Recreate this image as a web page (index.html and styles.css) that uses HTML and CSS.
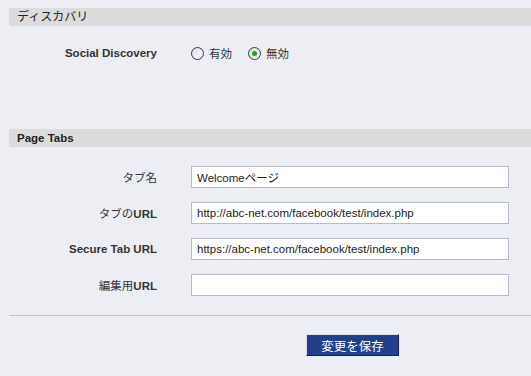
FILE: index.html
```html
<!DOCTYPE html>
<html lang="ja">
<head>
  <meta charset="UTF-8" />
  <title>アプリ設定</title>
  <link rel="stylesheet" href="styles.css">
</head>
<body>
  <div class="settings">
    <div class="section-head">ディスカバリ</div>
    <div class="row row-discovery">
      <div class="label bold">Social Discovery</div>
      <div class="field radios">
        <label class="radio"><span class="dot"></span>有効</label>
        <label class="radio"><span class="dot on"></span>無効</label>
      </div>
    </div>

    <div class="section-head bold">Page Tabs</div>
    <div class="rows">
      <div class="row">
        <div class="label">タブ名</div>
        <div class="field"><input class="text" value="Welcomeページ" /></div>
      </div>
      <div class="row">
        <div class="label">タブの<b>URL</b></div>
        <div class="field"><input class="text" value="http://abc-net.com/facebook/test/index.php" /></div>
      </div>
      <div class="row">
        <div class="label bold">Secure Tab URL</div>
        <div class="field"><input class="text" value="https://abc-net.com/facebook/test/index.php" /></div>
      </div>
      <div class="row">
        <div class="label">編集用<b>URL</b></div>
        <div class="field"><input class="text" value="" /></div>
      </div>
    </div>

    <div class="divider"></div>
    <div class="actions">
      <button class="save">変更を保存</button>
    </div>
  </div>
</body>
</html>
```

FILE: styles.css
```css
body {
  margin: 0;
  background-color: #eceef3;
  font-family: "Liberation Sans", "Noto Sans CJK JP", sans-serif;
  font-size: 11px;
  color: #333;
}

.settings {
  padding: 8px 0 0 9px;
}

.bold,
.label b {
  font-weight: bold;
}

.section-head {
  background-color: #dcdcdc;
  height: 18px;
  line-height: 18px;
  padding-left: 8px;
  font-size: 12px;
  color: #222;
}

.section-head.bold {
  font-size: 11.5px;
}

.row {
  display: flex;
  align-items: center;
}

.row-discovery {
  height: 52px;
  margin-top: 1px;
  margin-bottom: 50px;
}

.label {
  width: 148px;
  text-align: right;
  font-size: 11.5px;
  color: #333;
}

.field {
  margin-left: 34px;
}

.radios {
  display: flex;
  gap: 16px;
}

.radio {
  display: flex;
  align-items: center;
  gap: 5px;
  font-size: 11.5px;
  color: #333;
}

.dot {
  box-sizing: border-box;
  width: 13px;
  height: 13px;
  border: 1px solid #1c3b6e;
  border-radius: 50%;
  background: linear-gradient(135deg, #dcdcd4, #ffffff);
  display: flex;
  align-items: center;
  justify-content: center;
}

.dot.on::after {
  content: "";
  width: 5px;
  height: 5px;
  border-radius: 50%;
  background-color: #21a121;
}

.rows {
  display: flex;
  flex-direction: column;
  gap: 14px;
  margin-top: 19px;
}

.text {
  box-sizing: border-box;
  width: 318px;
  height: 22px;
  border: 1px solid #b4bccb;
  background-color: #fff;
  padding: 0 5px;
  font-family: "Liberation Sans", "Noto Sans CJK JP", sans-serif;
  font-size: 11.5px;
  color: #222;
}

.divider {
  margin-top: 19px;
  border-top: 1px solid #c2c3ca;
}

.actions {
  padding: 18px 0 0 297px;
}

.save {
  box-sizing: border-box;
  width: 93px;
  height: 22px;
  background-color: #213f8a;
  border: 1px solid;
  border-color: #d8dfea #0e1f5b #0e1f5b #d8dfea;
  color: #fff;
  font-family: "Noto Sans CJK JP", sans-serif;
  font-size: 12.5px;
  padding: 0;
}
```
